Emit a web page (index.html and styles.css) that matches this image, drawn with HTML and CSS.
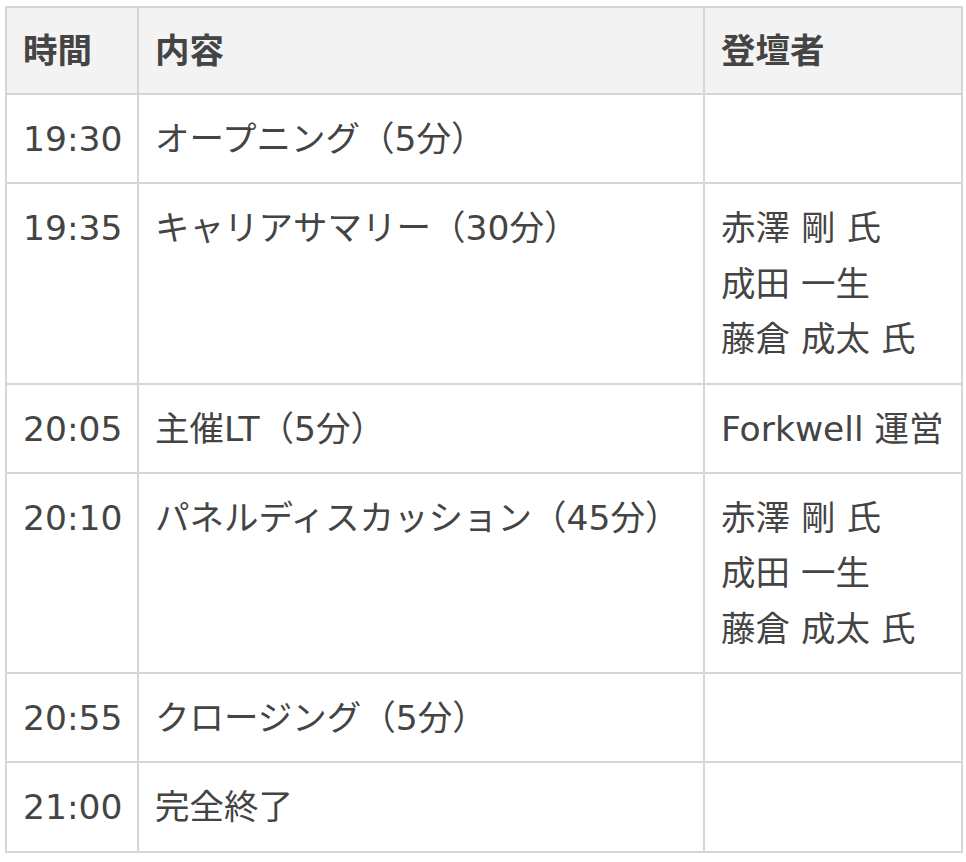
FILE: index.html
```html
<!DOCTYPE html>
<html lang="ja">
<head>
<meta charset="utf-8">
<link rel="stylesheet" href="styles.css">
</head>
<body>
<table class="schedule">
  <colgroup>
    <col class="c-time">
    <col class="c-content">
    <col class="c-speaker">
  </colgroup>
  <thead>
    <tr><th>時間</th><th>内容</th><th>登壇者</th></tr>
  </thead>
  <tbody>
    <tr><td>19:30</td><td>オープニング（5分）</td><td></td></tr>
    <tr><td>19:35</td><td>キャリアサマリー（30分）</td><td>赤澤 剛 氏<br>成田 一生<br>藤倉 成太 氏</td></tr>
    <tr><td>20:05</td><td>主催LT（5分）</td><td>Forkwell 運営</td></tr>
    <tr><td>20:10</td><td>パネルディスカッション（45分）</td><td>赤澤 剛 氏<br>成田 一生<br>藤倉 成太 氏</td></tr>
    <tr><td>20:55</td><td>クロージング（5分）</td><td></td></tr>
    <tr><td>21:00</td><td>完全終了</td><td></td></tr>
  </tbody>
</table>
</body>
</html>
```
FILE: styles.css
```css
html, body {
  margin: 0;
  padding: 0;
  background: #fff;
}
body {
  padding: 6px 0 0 5px;
  font-family: "DejaVu Sans", "Noto Sans CJK JP", sans-serif;
  color: #444;
}
.schedule {
  border-collapse: collapse;
  width: 956px;
  table-layout: fixed;
  font-size: 34.5px;
  line-height: 55.5px;
}
.c-time { width: 132px; }
.c-content { width: 566px; }
.c-speaker { width: 258px; }
.schedule th,
.schedule td {
  border: 2px solid #d6d6d6;
  padding: 17px 16px 14.75px;
  text-align: left;
  vertical-align: top;
  white-space: nowrap;
}
.schedule th {
  background: #f3f3f3;
  font-weight: bold;
  padding: 16px 16px 13.5px;
}
```
